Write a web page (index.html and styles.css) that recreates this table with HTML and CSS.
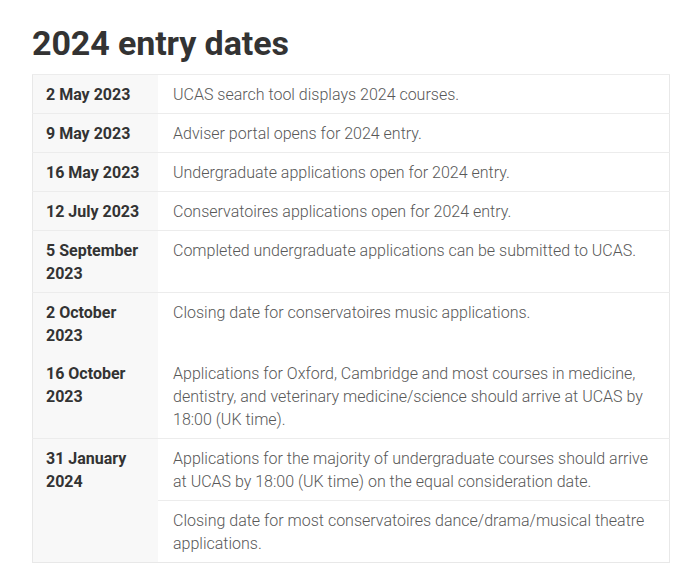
FILE: index.html
```html
<!DOCTYPE html>
<html lang="en">
<head>
<meta charset="utf-8">
<title>2024 entry dates</title>
<link rel="stylesheet" href="styles.css">
</head>
<body>
<main class="page">
  <h1 class="title">2024 entry dates</h1>
  <table class="dates">
    <tbody class="group">
      <tr><th>2 May 2023</th><td>UCAS search tool displays 2024 courses.</td></tr>
      <tr><th>9 May 2023</th><td>Adviser portal opens for 2024 entry.</td></tr>
      <tr><th>16 May 2023</th><td>Undergraduate applications open for 2024 entry.</td></tr>
    </tbody>
    <tbody class="group">
      <tr><th>12 July 2023</th><td>Conservatoires applications open for 2024 entry.</td></tr>
      <tr><th>5 September 2023</th><td>Completed undergraduate applications can be submitted to UCAS.</td></tr>
    </tbody>
    <tbody class="group">
      <tr class="joined"><th>2 October 2023</th><td>Closing date for conservatoires music applications.</td></tr>
      <tr class="joined"><th>16 October 2023</th><td>Applications for Oxford, Cambridge and most courses in medicine, dentistry, and veterinary medicine/science should arrive at UCAS by 18:00 (UK time).</td></tr>
    </tbody>
    <tbody class="group">
      <tr><th rowspan="2">31 January 2024</th><td>Applications for the majority of undergraduate courses should arrive at UCAS by 18:00 (UK time) on the equal consideration date.</td></tr>
      <tr><td>Closing date for most conservatoires dance/drama/musical theatre applications.</td></tr>
    </tbody>
  </table>
</main>
</body>
</html>
```
FILE: styles.css
```css
html, body {
  margin: 0;
  padding: 0;
  background: #ffffff;
}
body {
  font-family: Roboto, "Liberation Sans", sans-serif;
  color: #333;
}
.page {
  padding: 23px 16px 0 32px;
}
.title {
  margin: 0 0 11px 0;
  font-size: 34px;
  line-height: 40px;
  font-weight: 700;
  color: #333;
  letter-spacing: -0.1px;
}
.dates {
  width: 638px;
  border-collapse: collapse;
  border: 1px solid #e8e8e8;
  font-size: 16px;
  line-height: 23px;
}
.dates th, .dates td {
  padding: 8px 14px 7px 13px;
  vertical-align: top;
  text-align: left;
  border-top: 1px solid #ececec;
}
.dates th {
  width: 98px;
  background: #f8f8f8;
  font-weight: 700;
  color: #333;
}
.dates td {
  padding-left: 15px;
  font-weight: 300;
  color: #585858;
}
.dates .group {
  border-top: 1px solid #dcdcdc;
}
.dates tr.joined + tr.joined th,
.dates tr.joined + tr.joined td {
  border-top: 0;
}
```
